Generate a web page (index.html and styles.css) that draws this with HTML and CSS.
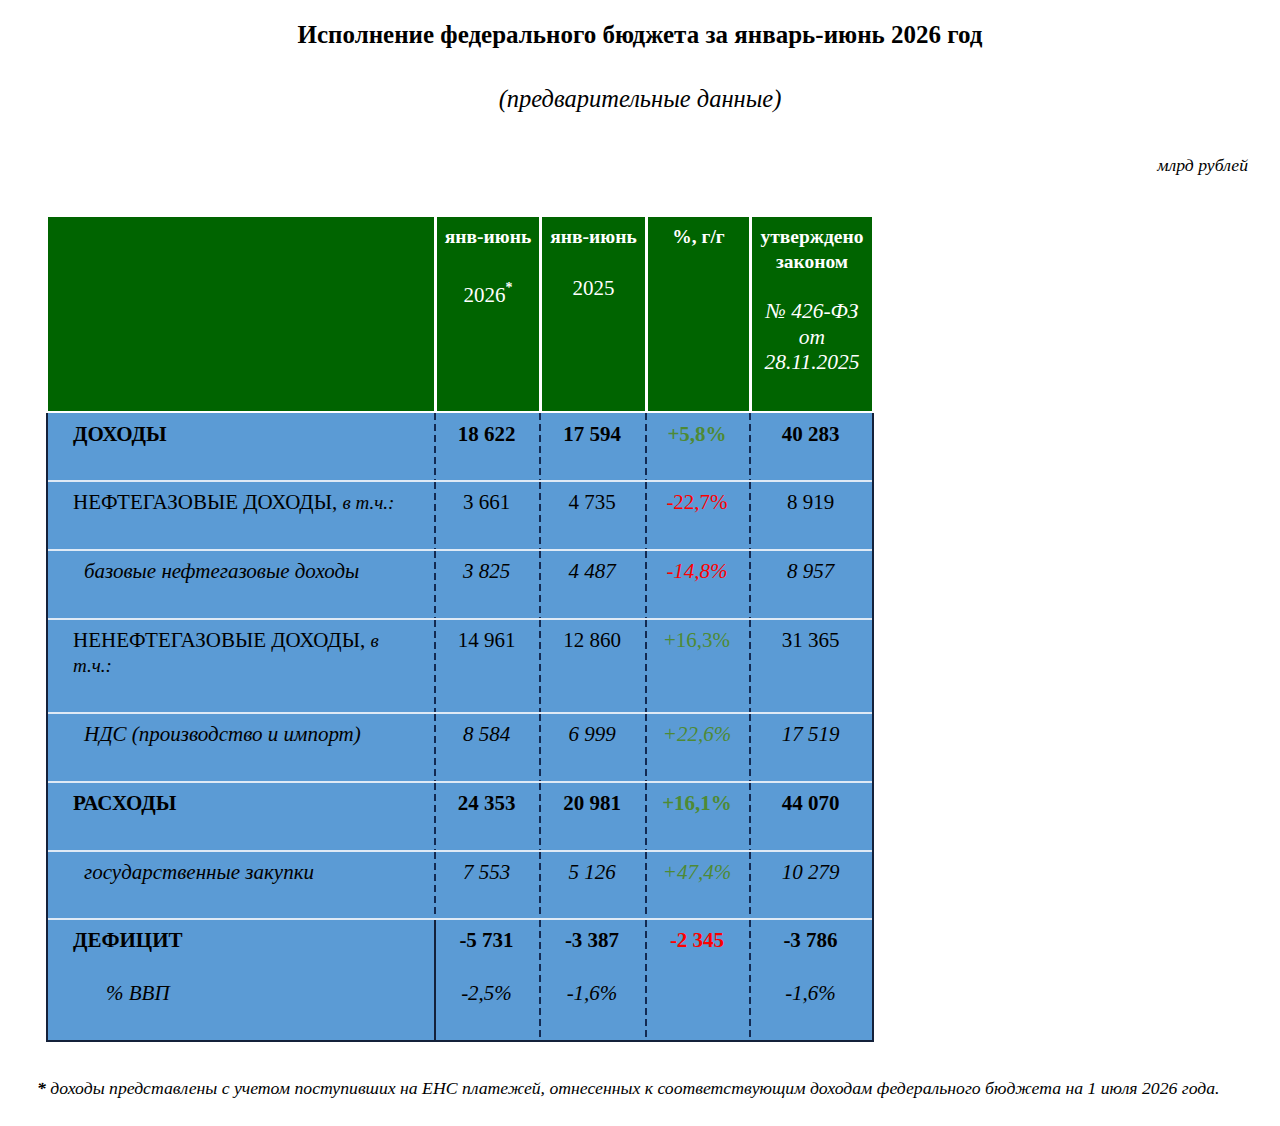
FILE: index.html
```html
<!DOCTYPE html>
<html lang="ru">
<head>
<meta charset="utf-8">
<title>Исполнение федерального бюджета</title>
<link rel="stylesheet" href="styles.css">
</head>
<body>
<div class="page">
  <h1 class="title">Исполнение федерального бюджета за январь-июнь 2026 год</h1>
  <p class="subtitle">(предварительные данные)</p>
  <p class="units">млрд рублей</p>

  <div class="table">
    <div class="head">
      <div class="hc hc-first"></div>
      <div class="hc">
        <div class="h-period">янв-июнь</div>
        <div class="h-year h-year-a">2026<sup>*</sup></div>
      </div>
      <div class="hc">
        <div class="h-period">янв-июнь</div>
        <div class="h-year h-year-b">2025</div>
      </div>
      <div class="hc">
        <div class="h-period">%, г/г</div>
      </div>
      <div class="hc hc-last">
        <div class="h-period">утверждено</div>
        <div class="h-period">законом</div>
        <div class="h-law">№ 426-ФЗ<br>от<br>28.11.2025</div>
      </div>
    </div>

    <div class="row first bold">
      <div class="c label">ДОХОДЫ</div>
      <div class="c num">18 622</div>
      <div class="c num">17 594</div>
      <div class="c num green">+5,8%</div>
      <div class="c num">40 283</div>
    </div>

    <div class="row">
      <div class="c label">НЕФТЕГАЗОВЫЕ ДОХОДЫ, <em class="small">в т.ч.:</em></div>
      <div class="c num">3 661</div>
      <div class="c num">4 735</div>
      <div class="c num red">-22,7%</div>
      <div class="c num">8 919</div>
    </div>

    <div class="row ital">
      <div class="c label sub">базовые нефтегазовые доходы</div>
      <div class="c num">3 825</div>
      <div class="c num">4 487</div>
      <div class="c num red">-14,8%</div>
      <div class="c num">8 957</div>
    </div>

    <div class="row tall">
      <div class="c label">НЕНЕФТЕГАЗОВЫЕ ДОХОДЫ, <em class="small">в</em> <em class="small">т.ч.:</em></div>
      <div class="c num">14 961</div>
      <div class="c num">12 860</div>
      <div class="c num green">+16,3%</div>
      <div class="c num">31 365</div>
    </div>

    <div class="row ital">
      <div class="c label sub">НДС (производство и импорт)</div>
      <div class="c num">8 584</div>
      <div class="c num">6 999</div>
      <div class="c num green">+22,6%</div>
      <div class="c num">17 519</div>
    </div>

    <div class="row bold">
      <div class="c label">РАСХОДЫ</div>
      <div class="c num">24 353</div>
      <div class="c num">20 981</div>
      <div class="c num green">+16,1%</div>
      <div class="c num">44 070</div>
    </div>

    <div class="row ital short">
      <div class="c label sub">государственные закупки</div>
      <div class="c num">7 553</div>
      <div class="c num">5 126</div>
      <div class="c num green">+47,4%</div>
      <div class="c num">10 279</div>
    </div>

    <div class="row deficit">
      <div class="c label">
        <div class="line bold">ДЕФИЦИТ</div>
        <div class="line ital second gdp">% ВВП</div>
      </div>
      <div class="c num solid-left">
        <div class="line bold">-5 731</div>
        <div class="line ital second">-2,5%</div>
      </div>
      <div class="c num">
        <div class="line bold">-3 387</div>
        <div class="line ital second">-1,6%</div>
      </div>
      <div class="c num">
        <div class="line bold red">-2 345</div>
      </div>
      <div class="c num">
        <div class="line bold">-3 786</div>
        <div class="line ital second">-1,6%</div>
      </div>
    </div>
  </div>

  <p class="note"><span class="star">*</span> доходы представлены с учетом поступивших на ЕНС платежей, отнесенных к соответствующим доходам федерального бюджета на 1 июля 2026 года.</p>
</div>
</body>
</html>
```

FILE: styles.css
```css
* {
  box-sizing: border-box;
}

html, body {
  margin: 0;
  padding: 0;
  background: #ffffff;
}

body {
  font-family: "Liberation Serif", "Times New Roman", serif;
  color: #000000;
  width: 1280px;
  height: 1126px;
  overflow: hidden;
}

.page {
  padding-top: 20px;
}

.title {
  margin: 0;
  text-align: center;
  font-size: 25px;
  line-height: 30px;
  font-weight: bold;
}

.subtitle {
  margin: 34px 0 0;
  text-align: center;
  font-size: 24.5px;
  line-height: 30px;
  font-style: italic;
}

.units {
  margin: 41px 32px 0 0;
  text-align: right;
  font-size: 17.7px;
  line-height: 20px;
  font-style: italic;
}

/* ---------- table ---------- */
.table {
  margin: 42px 0 0 46px;
  width: 828px;
}

.head {
  display: grid;
  grid-template-columns: 388px 105px 106px 104px 125px;
  height: 196px;
}

.row {
  display: grid;
  grid-template-columns: 386px 105px 106px 104px 123px;
  height: 69px;
  border-left: 2px solid #14213a;
  border-right: 2px solid #14213a;
}

.hc {
  background: #006400;
  color: #ffffff;
  border-left: 3px solid #ffffff;
  border-bottom: 2px solid #ffffff;
  text-align: center;
  padding-top: 7px;
}

.hc-first {
  border-left: 2px solid #ffffff;
}

.hc-last {
  border-right: 2px solid #ffffff;
}

.h-period {
  font-size: 19.5px;
  line-height: 25px;
  font-weight: bold;
  white-space: nowrap;
}

.h-year {
  font-size: 21px;
  line-height: 25px;
}

.h-year-a {
  margin-top: 34px;
}

.h-year-b {
  margin-top: 27px;
}

.h-year sup {
  font-size: 14px;
  font-weight: bold;
  vertical-align: 10px;
  line-height: 0;
}

.h-law {
  margin-top: 25px;
  font-size: 21.5px;
  line-height: 25.5px;
  font-style: italic;
}

.row .c {
  border-top: 2px solid #dfeaf6;
}

.row.first {
  height: 67px;
}

.row.first .c {
  border-top: 0;
}

.row.tall {
  height: 94px;
}

.row.short {
  height: 68px;
}

.row.deficit {
  height: 124px;
  border-bottom: 2px solid #14213a;
}

.c {
  background-color: #5b9bd5;
  font-size: 21px;
  line-height: 25px;
  padding-top: 8px;
}

.row.first .c {
  padding-top: 9px;
}

.num {
  text-align: center;
  background-image: repeating-linear-gradient(to bottom, #132a52 0 7px, transparent 7px 11px);
  background-size: 2px 100%;
  background-repeat: no-repeat;
  background-position: left top;
}

.num.solid-left {
  background-image: linear-gradient(#14213a, #14213a);
}

.label {
  padding-left: 25px;
  padding-right: 20px;
}

.label.sub {
  padding-left: 36px;
}

.bold .c,
.line.bold {
  font-weight: bold;
}

.ital .c,
.line.ital {
  font-style: italic;
}

.small {
  font-size: 19px;
  font-weight: normal;
}

.green {
  color: #4e8a35;
}

.red {
  color: #ff0000;
}

.line.second {
  margin-top: 28px;
}

.line.gdp {
  padding-left: 33px;
}

.note {
  margin: 36px 0 0 37px;
  font-size: 17.7px;
  line-height: 20px;
  font-style: italic;
  white-space: nowrap;
}

.star {
  font-weight: bold;
}
```
